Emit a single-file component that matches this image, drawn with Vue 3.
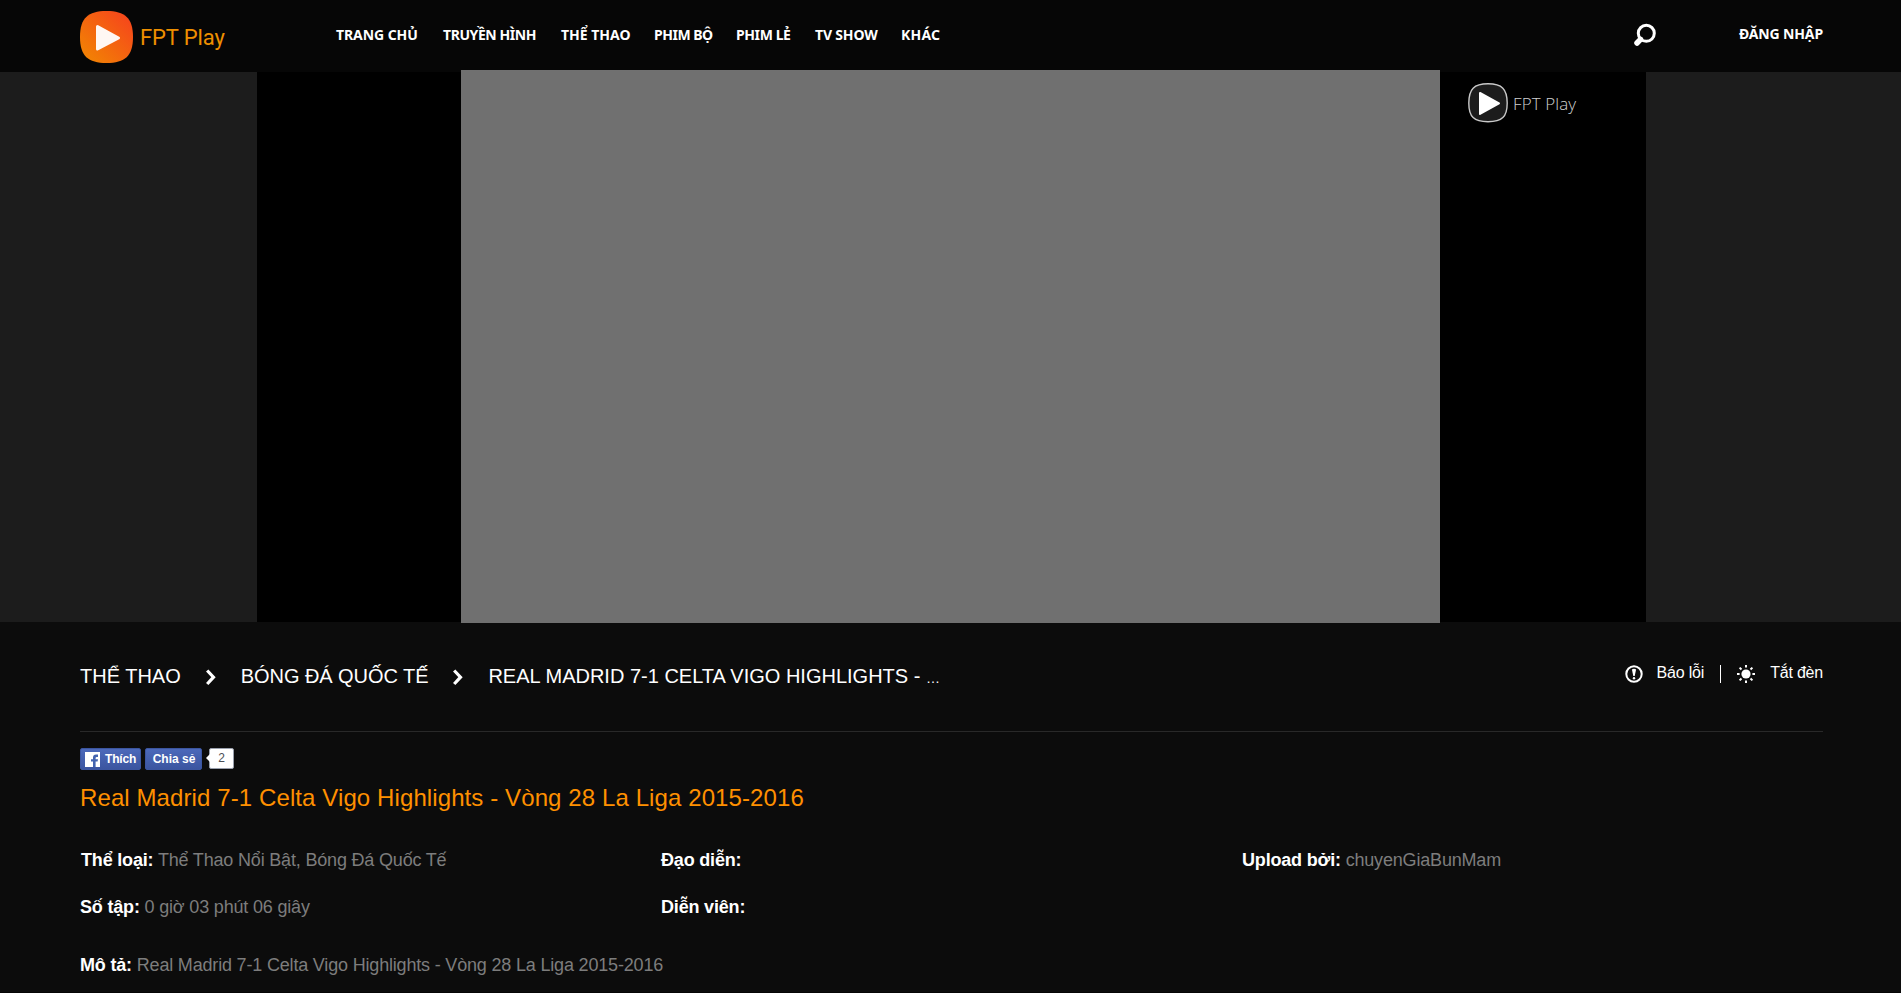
<script setup>
const nav = [
  { label: 'TRANG CHỦ', width: 107, spacing: -0.07 },
  { label: 'TRUYỀN HÌNH', width: 118, spacing: -0.42 },
  { label: 'THỂ THAO', width: 93, spacing: 0 },
  { label: 'PHIM BỘ', width: 82, spacing: -0.48 },
  { label: 'PHIM LẺ', width: 79, spacing: -0.4 },
  { label: 'TV SHOW', width: 86, spacing: -0.17 },
  { label: 'KHÁC', width: 60, spacing: 0.2 },
]
</script>

<template>
  <div class="page">
    <header class="header">
      <a class="logo">
        <svg width="53" height="53" viewBox="0 0 53 53">
          <defs>
            <linearGradient id="logoFill" x1="0" y1="1" x2="1" y2="0">
              <stop offset="0.1" stop-color="#f28204" />
              <stop offset="0.9" stop-color="#f6471b" />
            </linearGradient>
          </defs>
          <path d="M26.5 0C45 0 53 7 53 26S45 52 26.5 52 0 45 0 26 8 0 26.500 0Z" fill="url(#logoFill)" />
          <path d="M17.500 15.500 38.500 27 17.500 38Z" fill="#fff7f3" stroke="#fff7f3" stroke-width="3" stroke-linejoin="round" />
        </svg>
        <span class="logo-text">FPT Play</span>
      </a>
      <nav class="nav">
        <a v-for="n in nav" :key="n.label" :style="{ width: n.width + 'px', letterSpacing: n.spacing + 'px' }">{{ n.label }}</a>
      </nav>
      <svg class="search" width="24" height="24" viewBox="0 0 24 24" fill="none" stroke="#fff">
        <circle cx="13.300" cy="10.300" r="8" stroke-width="3" />
        <path d="M7.500 16.300 4 20" stroke-width="5.500" stroke-linecap="round" />
      </svg>
      <a class="login">ĐĂNG NHẬP</a>
    </header>

    <section class="stage">
      <div class="player">
        <div class="video"></div>
        <div class="watermark">
          <svg width="40" height="40" viewBox="0 0 40 40">
            <path d="M20 .8C34 .8 39.200 6 39.200 20S34 38.700 20 38.700 .8 34 .8 20 6 .8 20 .8Z" fill="#1c1c1c" stroke="#c9c9c9" stroke-width="1.400" />
            <path d="M12 10 31 20.300 12 31Z" fill="#fff" stroke="#fff" stroke-width="2" stroke-linejoin="round" />
          </svg>
          <span>FPT Play</span>
        </div>
      </div>
    </section>

    <main class="content">
      <div class="crumb-row">
        <div class="crumbs">
          <a>THỂ THAO</a>
          <svg width="10" height="17" viewBox="0 0 10 17"><path d="M1.200 1.500 7.500 8.200 1.200 15" fill="none" stroke="#fff" stroke-width="3.200" /></svg>
          <a class="mid">BÓNG ĐÁ QUỐC TẾ</a>
          <svg width="10" height="17" viewBox="0 0 10 17"><path d="M1.200 1.500 7.500 8.200 1.200 15" fill="none" stroke="#fff" stroke-width="3.200" /></svg>
          <a>REAL MADRID 7-1 CELTA VIGO HIGHLIGHTS - <small>…</small></a>
        </div>
        <div class="tools">
          <svg class="warn" width="18" height="18" viewBox="0 0 18 18">
            <circle cx="9" cy="9" r="7.700" fill="none" stroke="#fff" stroke-width="2" />
            <path d="M6.900 4.500Q9 3.200 11.100 4.500L9.700 11H8.300Z" fill="#fff" />
            <circle cx="9" cy="13.300" r="1.200" fill="#fff" />
          </svg>
          <a>Báo lỗi</a>
          <i class="divider"></i>
          <svg class="sun" width="18" height="18" viewBox="0 0 18 18">
            <circle cx="9" cy="9" r="4.600" fill="#fff" />
            <path d="M9 0V2.600M9 15.400V18M0 9H2.600M15.400 9H18M2.600 2.600 4.500 4.500M13.500 13.500 15.400 15.400M2.600 15.400 4.500 13.500M13.500 4.500 15.400 2.600" stroke="#fff" stroke-width="2" />
          </svg>
          <a>Tắt đèn</a>
        </div>
      </div>

      <div class="social">
        <button class="fb like">
          <svg width="15" height="15" viewBox="0 0 15 15">
            <rect width="15" height="15" fill="#fff" />
            <path d="M8 15V9.500H6V7.200H8V5.500Q8 2.600 11 2.600H13V4.900H11.800Q10.600 4.900 10.600 6V7.200H13L12.600 9.500H10.600V15Z" fill="#4464b0" />
          </svg>
          <span>Thích</span>
        </button>
        <button class="fb share">Chia sẻ</button>
        <span class="count">2</span>
      </div>

      <h1>Real Madrid 7-1 Celta Vigo Highlights - Vòng 28 La Liga 2015-2016</h1>

      <div class="info">
        <p class="genre"><b>Thể loại:</b> Thể Thao Nổi Bật, Bóng Đá Quốc Tế</p>
        <p><b>Đạo diễn:</b></p>
        <p><b>Upload bởi:</b> chuyenGiaBunMam</p>
        <p><b>Số tập:</b> 0 giờ 03 phút 06 giây</p>
        <p><b>Diễn viên:</b></p>
      </div>
      <p class="desc"><b>Mô tả:</b> Real Madrid 7-1 Celta Vigo Highlights - Vòng 28 La Liga 2015-2016</p>
    </main>
  </div>
</template>

<style>
body { background: #0c0c0c; }
</style>

<style scoped>
.page { height: 993px; box-sizing: border-box; border-bottom: 1px solid #050505; overflow: hidden; background: #0c0c0c; font-family: "Liberation Sans", Arial, sans-serif; color: #fff; }
.header { height: 72px; box-sizing: border-box; background: #060606; display: flex; align-items: flex-start; padding: 0 78px 0 80px; }
.logo { display: flex; width: 256px; padding-top: 11px; }
.logo-text { margin-left: 7px; font: 400 22px/54px Roboto, sans-serif; letter-spacing: -0.1px; color: #ee8f00; white-space: nowrap; }
.nav { display: flex; flex: 1; }
.nav a, .login { font: bold 14px/20px "Noto Sans", sans-serif; white-space: nowrap; padding-top: 25px; }
.search { margin: 23px 82px 0 0; }
.login { width: 84px; padding-top: 24px; letter-spacing: -0.15px; }
.stage { height: 550px; background: #1c1c1c; padding-left: 257px; }
.player { position: relative; width: 1389px; height: 550px; background: #000; }
.video { position: absolute; left: 204px; top: -2px; width: 979px; height: 553px; background: #707070; }
.watermark { position: absolute; left: 1211px; top: 11px; display: flex; }
.watermark span { margin-left: 5px; font: 300 17px/41px "Open Sans", sans-serif; letter-spacing: 0.1px; color: #d0d0d0; white-space: nowrap; }
.content { padding: 0 78px 0 80px; }
.crumb-row { height: 110px; box-sizing: border-box; border-bottom: 1px solid #292929; display: flex; justify-content: space-between; }
.crumbs { display: flex; padding-top: 42px; font-size: 20px; line-height: 24px; white-space: nowrap; }
.crumbs svg { margin: 5px 25px 0; }
.crumbs .mid { letter-spacing: -0.06px; }
.crumbs small { font-size: 14px; }
.tools { display: flex; padding-top: 42px; font-size: 16px; line-height: 18px; letter-spacing: -0.2px; white-space: nowrap; }
.tools svg { margin-top: 1px; }
.warn { margin-right: 14px; }
.divider { width: 1px; height: 18px; margin: 1px 16px 0; background: #fff; }
.sun { margin-right: 15px; }
.social { display: flex; height: 22px; margin-top: 16px; }
.fb { height: 22px; box-sizing: border-box; margin: 0; padding: 0; border: 1px solid #3b55a0; border-radius: 2px; background: linear-gradient(#4c69ba, #3b55a0); color: #fff; font: bold 12px/20px "Liberation Sans", Arial, sans-serif; white-space: nowrap; }
.like { width: 61px; display: flex; align-items: center; padding-left: 4px; }
.like span { margin-left: 5px; letter-spacing: -0.15px; }
.share { width: 57px; margin-left: 4px; padding-left: 1px; }
.count { position: relative; box-sizing: border-box; width: 25px; height: 21px; margin-left: 7px; border: 1px solid #9aa0ad; border-radius: 2px; background: #fff; color: #4b4f56; font-size: 12px; line-height: 18px; text-align: center; }
.count::before { content: ""; position: absolute; left: -4px; top: 5px; border: solid transparent; border-width: 4px 4px 4px 0; border-right-color: #fff; }
h1 { margin: 14px 0 0; font-weight: normal; font-size: 24px; line-height: 28px; letter-spacing: 0.1px; color: #ff9000; }
.info { display: grid; grid-template-columns: 581px 581px 1fr; grid-auto-rows: 47px; margin-top: 38px; }
p { margin: 0; font-size: 18px; line-height: 20px; letter-spacing: -0.18px; color: #7d7d7d; white-space: nowrap; }
p b { color: #fff; }
.genre { padding-left: 1px; }
.desc { margin-top: 11px; }
</style>
